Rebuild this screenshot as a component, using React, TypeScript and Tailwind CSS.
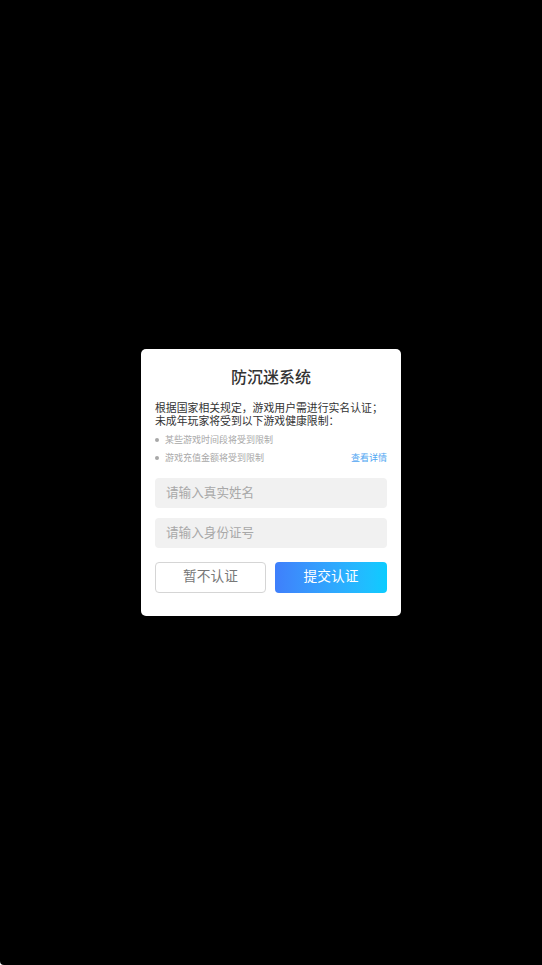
export default function App() {
  return (
    <div className="h-[965px] w-full overflow-hidden bg-white">
      <div className="flex h-full items-center justify-center rounded-bl-[4px] bg-black pb-[1px] font-['Liberation_Sans','Noto_Sans_CJK_SC',sans-serif]">
        <div className="flex h-[267px] w-[260px] flex-col rounded-[5px] bg-white px-[14px]">
          <h2 className="mt-[18px] text-center text-[16px] leading-[21px] font-medium text-[#333333]">防沉迷系统</h2>

          <p className="mt-[14px] text-[10.85px] leading-[13px] text-[#333333]">
            根据国家相关规定，游戏用户需进行实名认证；
            <br />
            未成年玩家将受到以下游戏健康限制：
          </p>

          <ul className="mt-[3px] text-[9px] leading-[18px] text-[#a8a8a8]">
            <li className="flex items-center">
              <span className="mr-[6px] h-[4px] w-[4px] rounded-full bg-[#a8a8a8]"></span>
              某些游戏时间段将受到限制
            </li>
            <li className="flex items-center">
              <span className="mr-[6px] h-[4px] w-[4px] rounded-full bg-[#a8a8a8]"></span>
              游戏充值金额将受到限制
              <a className="ml-auto text-[#4fa6f2]">查看详情</a>
            </li>
          </ul>

          <input
            placeholder="请输入真实姓名"
            className="mt-[11px] h-[30px] w-full rounded-[4px] bg-[#f1f1f1] px-[11px] text-[12.6px] outline-none placeholder:text-[#a8a8a8]"
          />
          <input
            placeholder="请输入身份证号"
            className="mt-[10px] h-[30px] w-full rounded-[4px] bg-[#f1f1f1] px-[11px] text-[12.6px] outline-none placeholder:text-[#a8a8a8]"
          />

          <div className="mt-[14px] flex gap-[9px]">
            <button className="h-[31px] w-[111px] rounded-[4px] border border-[#d5d5d5] bg-white text-[13.7px] text-[#777777]">
              暂不认证
            </button>
            <button className="h-[31px] w-[112px] rounded-[4px] bg-gradient-to-r from-[#3f7ffb] to-[#0accff] text-[13.7px] text-white">
              提交认证
            </button>
          </div>
        </div>
      </div>
    </div>
  );
}
